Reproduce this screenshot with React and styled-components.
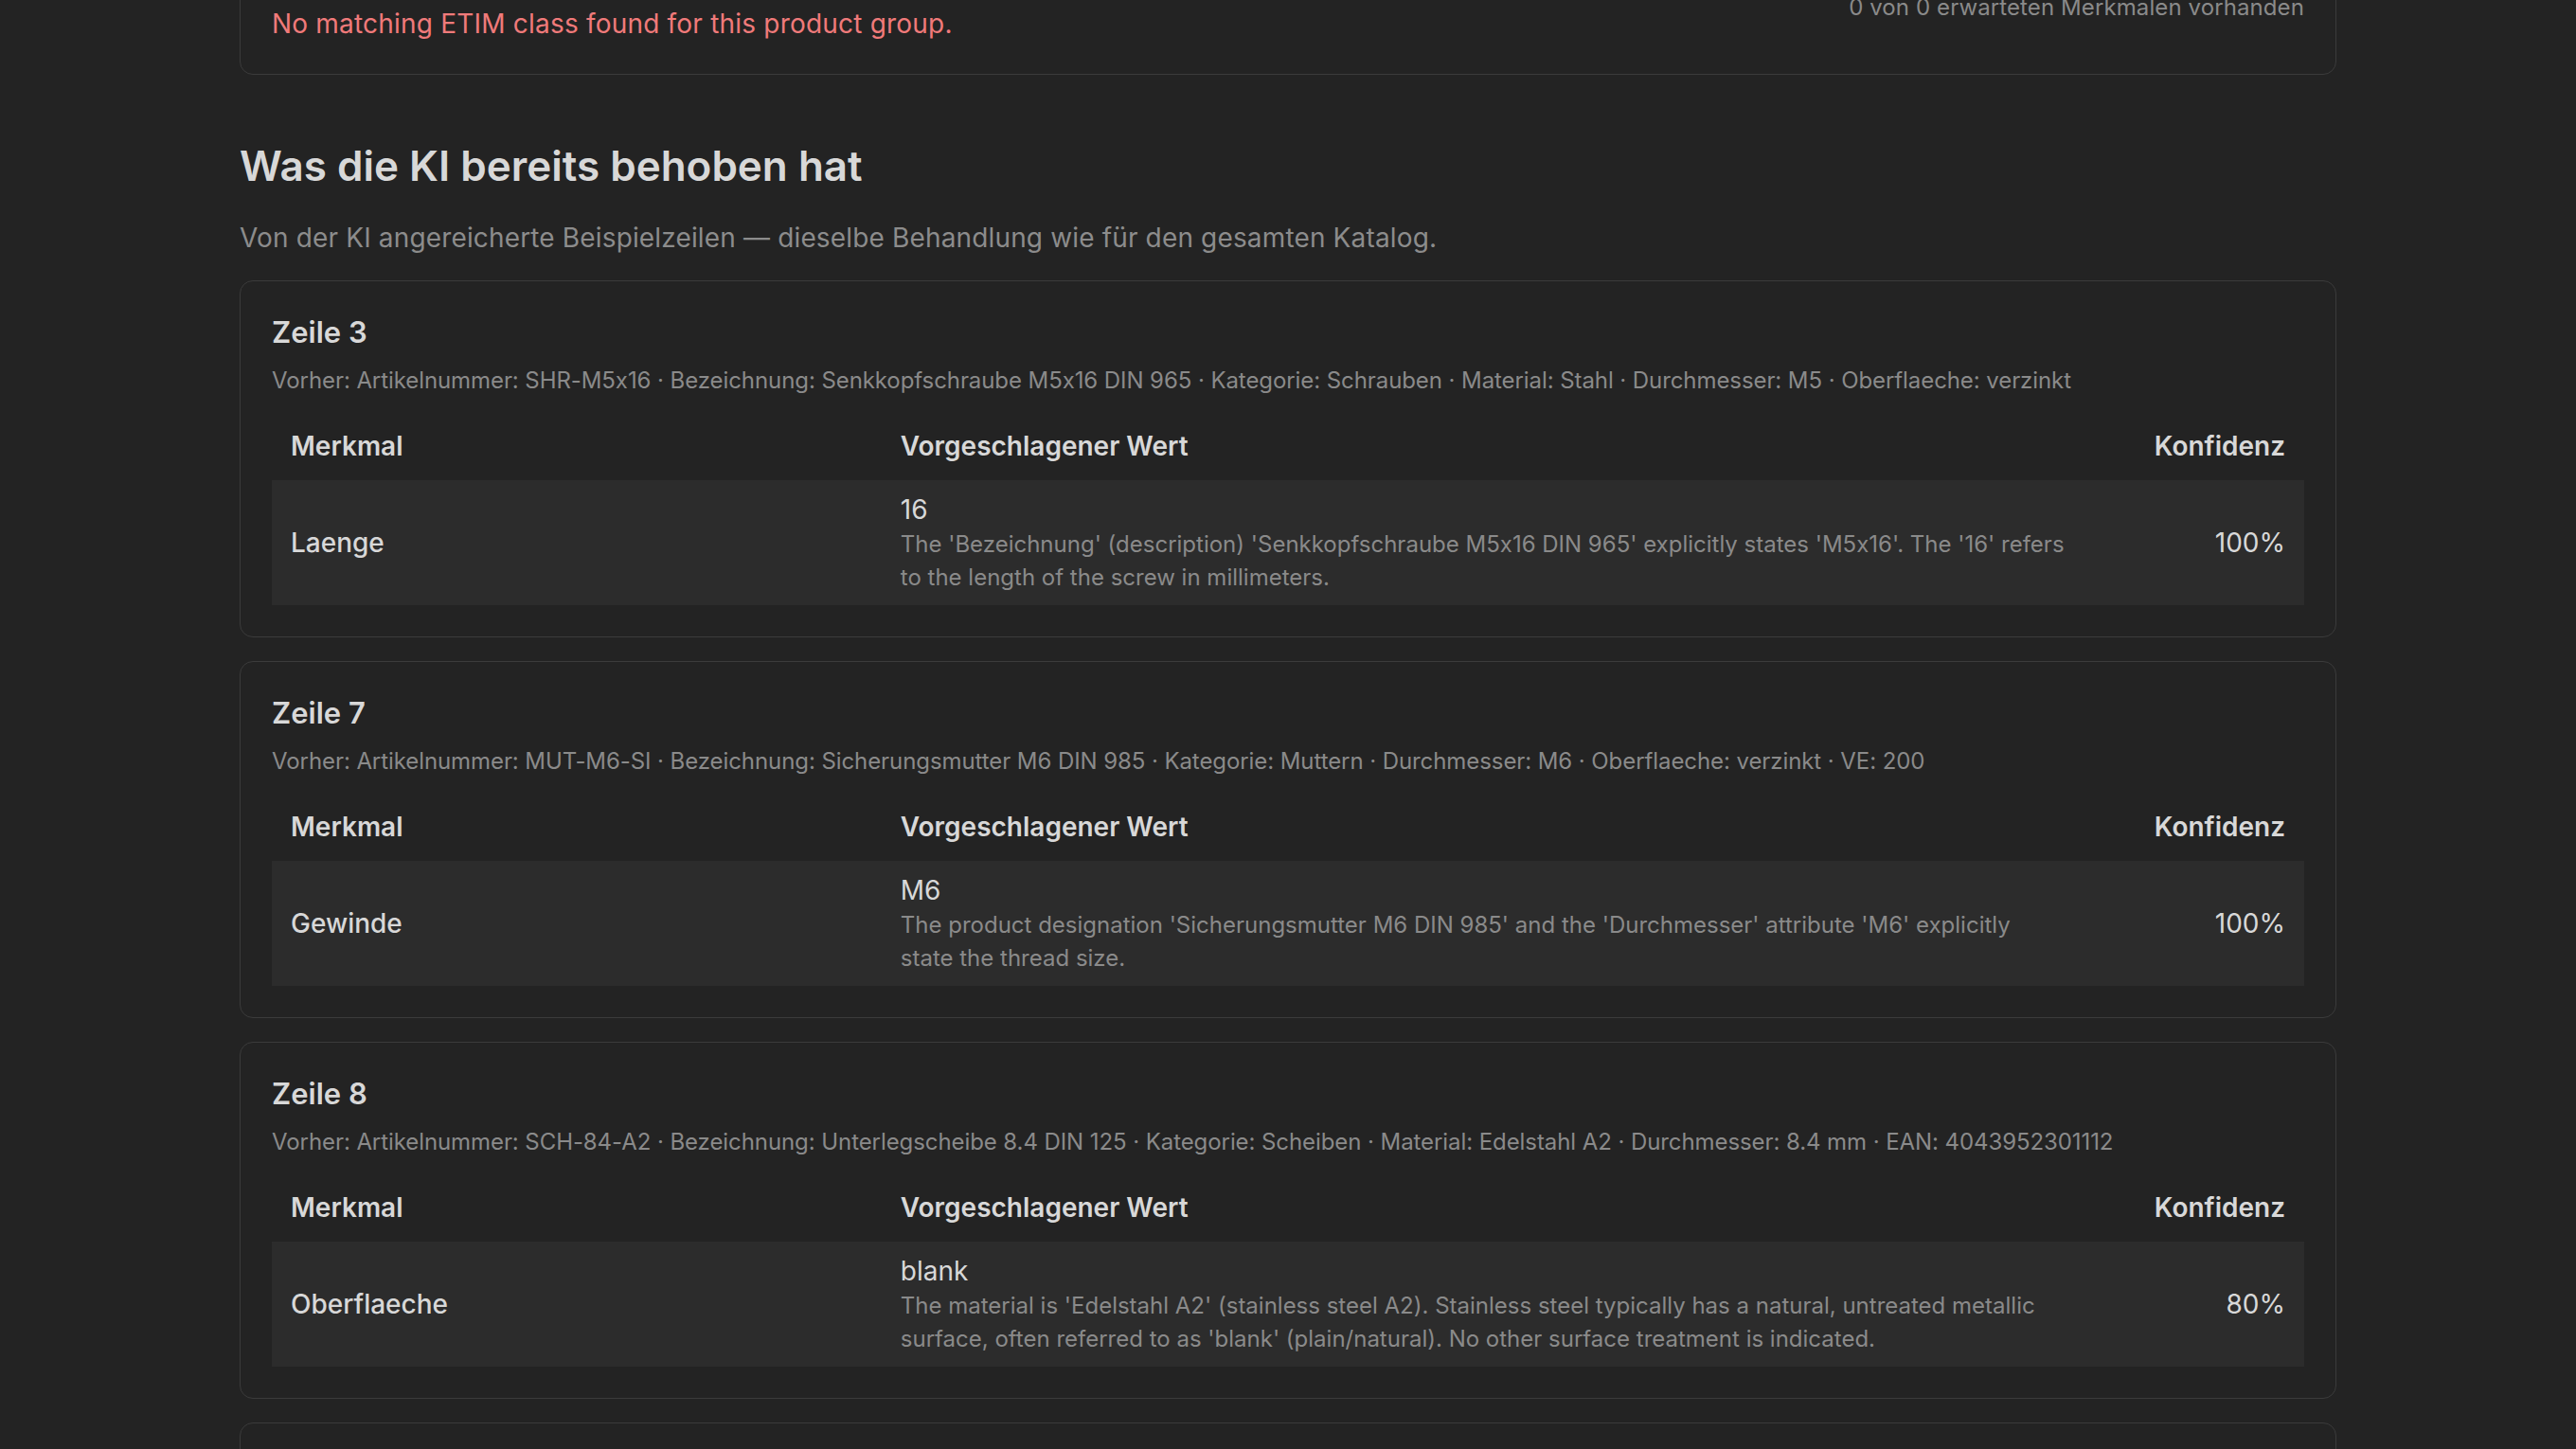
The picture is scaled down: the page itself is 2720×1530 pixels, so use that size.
import React from 'react';
import styled, { createGlobalStyle } from 'styled-components';

const GlobalStyle = createGlobalStyle`
  html, body {
    margin: 0;
    padding: 0;
    background: #232323;
    color: #d6d6d6;
    font-family: Inter, "Noto Sans", sans-serif;
    font-feature-settings: "calt" 0;
  }
  * {
    box-sizing: border-box;
  }
`;

const Page = styled.main`
  width: 2214px;
  margin: 0 auto;
  display: flex;
  flex-direction: column;
`;

const Card = styled.section`
  border: 1px solid #3b3b3b;
  border-radius: 14px;
  padding: 33px;
  display: flex;
  flex-direction: column;
  margin-top: ${(props) => props.offset || 0}px;
`;

const CardHeader = styled.div`
  display: flex;
  justify-content: space-between;
  align-items: flex-start;
`;

const HeaderCol = styled.div`
  display: flex;
  flex-direction: column;
  align-items: ${(props) => (props.right ? 'flex-end' : 'flex-start')};
`;

const GroupName = styled.div`
  font-size: 31px;
  line-height: 44px;
  font-weight: 600;
  margin-bottom: 27px;
`;

const Score = styled.div`
  font-size: 38px;
  line-height: 57px;
  font-weight: 600;
`;

const Coverage = styled.div`
  font-size: 24px;
  line-height: 34px;
  letter-spacing: 0.1px;
  color: #8a8a8a;
`;

const ErrorText = styled.p`
  margin: 0;
  font-size: 28px;
  line-height: 40px;
  letter-spacing: 0.2px;
  color: #f07a7a;
`;

const Section = styled.div`
  display: flex;
  flex-direction: column;
  gap: 25px;
  margin-top: 25px;
`;

const SectionTitle = styled.h2`
  margin: 69px 0 0;
  font-size: 44px;
  line-height: 55px;
  font-weight: 600;
  color: #d8d8d8;
`;

const SectionLead = styled.p`
  margin: 28px 0 0;
  font-size: 28px;
  line-height: 40px;
  letter-spacing: 0.15px;
  color: #8c8c8c;
`;

const RowTitle = styled.h3`
  margin: 0;
  font-size: 31px;
  line-height: 42px;
  font-weight: 600;
  color: #d8d8d8;
`;

const Before = styled.p`
  margin: 13px 0 16px;
  font-size: 24px;
  line-height: 34px;
  letter-spacing: -0.08px;
  color: #8a8a8a;
  white-space: nowrap;
`;

const Table = styled.div`
  display: grid;
  grid-template-columns: 30% 1fr 231px;
`;

const Th = styled.div`
  padding: 16px 20px;
  font-size: 28px;
  line-height: 40px;
  font-weight: 600;
  color: #d8d8d8;
  text-align: ${(props) => (props.end ? 'right' : 'left')};
`;

const Td = styled.div`
  background: #2c2c2c;
  padding: 12px 20px;
  display: flex;
  flex-direction: column;
  justify-content: center;
  align-items: ${(props) => (props.end ? 'flex-end' : 'flex-start')};
  font-size: 28px;
  line-height: 38px;
  font-weight: ${(props) => (props.strong ? 500 : 400)};
  color: #d8d8d8;
`;

const Reason = styled.div`
  font-size: 24px;
  line-height: 35px;
  color: #8a8a8a;
`;

const fixes = [
  {
    row: 3,
    before:
      'Vorher: Artikelnummer: SHR-M5x16 · Bezeichnung: Senkkopfschraube M5x16 DIN 965 · Kategorie: Schrauben · Material: Stahl · Durchmesser: M5 · Oberflaeche: verzinkt',
    attr: 'Laenge',
    value: '16',
    reason:
      "The 'Bezeichnung' (description) 'Senkkopfschraube M5x16 DIN 965' explicitly states 'M5x16'. The '16' refers to the length of the screw in millimeters.",
    confidence: '100%',
  },
  {
    row: 7,
    before:
      'Vorher: Artikelnummer: MUT-M6-SI · Bezeichnung: Sicherungsmutter M6 DIN 985 · Kategorie: Muttern · Durchmesser: M6 · Oberflaeche: verzinkt · VE: 200',
    attr: 'Gewinde',
    value: 'M6',
    reason:
      "The product designation 'Sicherungsmutter M6 DIN 985' and the 'Durchmesser' attribute 'M6' explicitly state the thread size.",
    confidence: '100%',
  },
  {
    row: 8,
    before:
      'Vorher: Artikelnummer: SCH-84-A2 · Bezeichnung: Unterlegscheibe 8.4 DIN 125 · Kategorie: Scheiben · Material: Edelstahl A2 · Durchmesser: 8.4 mm · EAN: 4043952301112',
    attr: 'Oberflaeche',
    value: 'blank',
    reason:
      "The material is 'Edelstahl A2' (stainless steel A2). Stainless steel typically has a natural, untreated metallic surface, often referred to as 'blank' (plain/natural). No other surface treatment is indicated.",
    confidence: '80%',
  },
];

const FixCard = ({ fix }) => (
  <Card>
    <RowTitle>Zeile {fix.row}</RowTitle>
    {fix.before && <Before>{fix.before}</Before>}
    {fix.attr && (
      <Table>
        <Th>Merkmal</Th>
        <Th>Vorgeschlagener Wert</Th>
        <Th end>Konfidenz</Th>
        <Td strong>{fix.attr}</Td>
        <Td>
          {fix.value}
          <Reason>{fix.reason}</Reason>
        </Td>
        <Td end>{fix.confidence}</Td>
      </Table>
    )}
  </Card>
);

const App = () => (
  <>
    <GlobalStyle />
    <Page>
      <Card offset={-100}>
        <CardHeader>
          <HeaderCol>
            <GroupName>Schrauben</GroupName>
            <ErrorText>No matching ETIM class found for this product group.</ErrorText>
          </HeaderCol>
          <HeaderCol right>
            <Score>0%</Score>
            <Coverage>0 von 0 erwarteten Merkmalen vorhanden</Coverage>
          </HeaderCol>
        </CardHeader>
      </Card>

      <SectionTitle>Was die KI bereits behoben hat</SectionTitle>
      <SectionLead>
        Von der KI angereicherte Beispielzeilen — dieselbe Behandlung wie für den gesamten Katalog.
      </SectionLead>

      <Section>
        {fixes.map((fix) => (
          <FixCard key={fix.row} fix={fix} />
        ))}
        <FixCard fix={{ row: 9 }} />
      </Section>
    </Page>
  </>
);

export default App;
